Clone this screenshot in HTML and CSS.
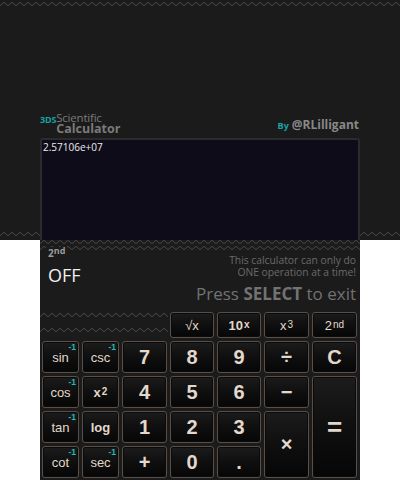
FILE: index.html
```html
<!DOCTYPE html>
<html lang="en">
<head>
<meta charset="utf-8">
<title>3DS Scientific Calculator</title>
<link rel="stylesheet" href="styles.css">
</head>
<body>
<div class="top">
  <header class="head">
    <div class="brand">
      <span class="ds">3DS</span>
      <div class="title"><span class="t1">Scientific</span><span class="t2">Calculator</span></div>
    </div>
    <div class="by"><span class="by-label">By</span><span class="handle">@RLilligant</span></div>
  </header>
  <div class="display">2.57106e+07</div>
</div>
<div class="bottom">
  <div class="info">
    <div class="state">
      <span class="mode">2<sup>nd</sup></span>
      <span class="off">OFF</span>
    </div>
    <div class="notes">
      <p class="warn"><span class="wl">This calculator can only do</span><span class="wl">ONE operation at a time!</span></p>
      <p class="exit">Press <b>SELECT</b> to exit</p>
    </div>
  </div>
  <div class="keypad">
    <div class="spacer"></div>
    <div class="key small">&radic;x</div>
    <div class="key small bold">10<sup>x</sup></div>
    <div class="key small">x<sup>3</sup></div>
    <div class="key small">2<sup>nd</sup></div>

    <div class="key fn">sin<span class="inv">-1</span></div>
    <div class="key fn">csc<span class="inv">-1</span></div>
    <div class="key num">7</div>
    <div class="key num">8</div>
    <div class="key num">9</div>
    <div class="key num">&divide;</div>
    <div class="key num">C</div>

    <div class="key fn">cos<span class="inv">-1</span></div>
    <div class="key fn bold">x<sup>2</sup></div>
    <div class="key num">4</div>
    <div class="key num">5</div>
    <div class="key num">6</div>
    <div class="key num">&minus;</div>
    <div class="key num eq">=</div>

    <div class="key fn">tan<span class="inv">-1</span></div>
    <div class="key fn bold">log</div>
    <div class="key num">1</div>
    <div class="key num">2</div>
    <div class="key num">3</div>
    <div class="key num mul">&times;</div>

    <div class="key fn">cot<span class="inv">-1</span></div>
    <div class="key fn">sec<span class="inv">-1</span></div>
    <div class="key num">+</div>
    <div class="key num">0</div>
    <div class="key num">.</div>
  </div>
</div>
</body>
</html>
```

FILE: styles.css
```css
* { box-sizing: border-box; }

html, body {
  margin: 0;
  padding: 0;
  background: #ffffff;
}

body {
  width: 400px;
  font-family: "Open Sans", "DejaVu Sans", sans-serif;
}

.top {
  height: 240px;
  background-color: #1b1b1b;
  background-image:
    url("data:image/svg+xml,%3Csvg xmlns='http://www.w3.org/2000/svg' width='8' height='4'%3E%3Cpath d='M0 3.5C2 3.5 2 .5 4 .5S6 3.5 8 3.5' fill='none' stroke='%23454545'/%3E%3C/svg%3E"),
    url("data:image/svg+xml,%3Csvg xmlns='http://www.w3.org/2000/svg' width='8' height='4'%3E%3Cpath d='M0 3.5C2 3.5 2 .5 4 .5S6 3.5 8 3.5' fill='none' stroke='%23454545'/%3E%3C/svg%3E");
  background-repeat: repeat-x, repeat-x;
  background-position: 0 2px, 0 232px;
  display: flex;
  flex-direction: column;
  justify-content: flex-end;
}

.head {
  display: flex;
  justify-content: space-between;
  align-items: flex-end;
  margin: 0 41px 4px 40px;
}

.brand {
  display: flex;
  align-items: flex-start;
}

.ds {
  color: #17a3a3;
  font-size: 9px;
  font-weight: 700;
  line-height: 10px;
  margin-top: 2px;
  letter-spacing: -0.2px;
}

.title {
  display: flex;
  flex-direction: column;
  color: #7a7a7a;
}

.t1 {
  font-size: 11.5px;
  line-height: 10px;
  font-weight: 400;
  letter-spacing: -0.2px;
}

.t2 {
  font-size: 12.5px;
  line-height: 11px;
  font-weight: 700;
}

.by {
  display: flex;
  align-items: baseline;
  gap: 3px;
  margin-bottom: 1px;
}

.by-label {
  color: #17a3a3;
  font-size: 9px;
  font-weight: 700;
}

.handle {
  color: #888888;
  font-size: 12px;
  font-weight: 700;
}

.display {
  height: 102px;
  margin: 0 40px;
  border: 2px solid #2b2b2b;
  border-bottom: none;
  border-radius: 3px 3px 0 0;
  background: #0e0c18;
  color: #ececec;
  font-size: 10px;
  line-height: 12px;
  padding: 1px 1px;
}

.bottom {
  width: 320px;
  height: 240px;
  margin: 0 40px;
  background: #1b1b1b;
  padding-bottom: 2px;
}

.info {
  height: 72px;
  display: flex;
  justify-content: space-between;
  background-image:
    url("data:image/svg+xml,%3Csvg xmlns='http://www.w3.org/2000/svg' width='8' height='4'%3E%3Cpath d='M0 3.5C2 3.5 2 .5 4 .5S6 3.5 8 3.5' fill='none' stroke='%23454545'/%3E%3C/svg%3E"),
    url("data:image/svg+xml,%3Csvg xmlns='http://www.w3.org/2000/svg' width='8' height='4'%3E%3Cpath d='M0 3.5C2 3.5 2 .5 4 .5S6 3.5 8 3.5' fill='none' stroke='%23454545'/%3E%3C/svg%3E");
  background-repeat: repeat-x, repeat-x;
  background-position: 0 0, 0 6px;
}

.state {
  display: flex;
  flex-direction: column;
  align-items: flex-start;
  padding: 7px 0 0 6px;
}

.mode {
  background: #1b1b1b;
  color: #9a9a9a;
  font-size: 10px;
  font-weight: 700;
  line-height: 12px;
  padding: 0 2px;
}

.mode sup {
  font-size: 9px;
  vertical-align: 3px;
  line-height: 0;
}

.off {
  color: #f0f0f0;
  font-size: 18px;
  line-height: 20px;
  margin: 6px 0 0 2px;
}

.notes {
  text-align: right;
  padding: 14px 4px 0 0;
}

.notes p { margin: 0; }

.warn {
  display: flex;
  flex-direction: column;
  align-items: flex-end;
  color: #6a6a6a;
  font-size: 10.3px;
  line-height: 12px;
}

.wl {
  display: block;
  height: 12px;
}

.exit {
  color: #727272;
  font-size: 17px;
  line-height: 20px;
  margin-top: 6px !important;
}

.exit b { font-weight: 700; }

.keypad {
  display: grid;
  grid-template-columns: 37px 37px 45px 44px 44px 45px 45px;
  grid-template-rows: 26px repeat(4, 32px);
  gap: 3px;
  padding-left: 2px;
}

.spacer {
  grid-column: span 3;
  margin-left: -2px;
  margin-right: -1px;
  background-image:
    url("data:image/svg+xml,%3Csvg xmlns='http://www.w3.org/2000/svg' width='8' height='4'%3E%3Cpath d='M0 3.5C2 3.5 2 .5 4 .5S6 3.5 8 3.5' fill='none' stroke='%23454545'/%3E%3C/svg%3E"),
    url("data:image/svg+xml,%3Csvg xmlns='http://www.w3.org/2000/svg' width='8' height='4'%3E%3Cpath d='M0 3.5C2 3.5 2 .5 4 .5S6 3.5 8 3.5' fill='none' stroke='%23454545'/%3E%3C/svg%3E");
  background-repeat: repeat-x, repeat-x;
  background-position: 0 1px, 0 16px;
}

.key {
  position: relative;
  display: flex;
  align-items: center;
  justify-content: center;
  border: 1px solid #5a4f46;
  border-radius: 3px;
  background: linear-gradient(to bottom, #1c1c1c 0%, #101010 45%, #060606 100%);
  box-shadow: inset 0 0 0 1px #0a0a0a;
  color: #e2d8cc;
  font-family: "Liberation Sans", Arial, sans-serif;
}

.key sup {
  line-height: 0;
  vertical-align: 6px;
  font-size: 10px;
  margin-left: 1px;
}

.small {
  font-size: 13px;
}

.bold { font-weight: 700; }

.fn {
  font-size: 13px;
}

.num {
  font-size: 20px;
  font-weight: 700;
}

.eq {
  grid-row: span 3;
  font-size: 26px;
}

.mul {
  grid-row: span 2;
}

.inv {
  position: absolute;
  top: 1px;
  right: 2px;
  color: #20b8b8;
  font-size: 8.5px;
  font-weight: 700;
  line-height: 9px;
}
```
